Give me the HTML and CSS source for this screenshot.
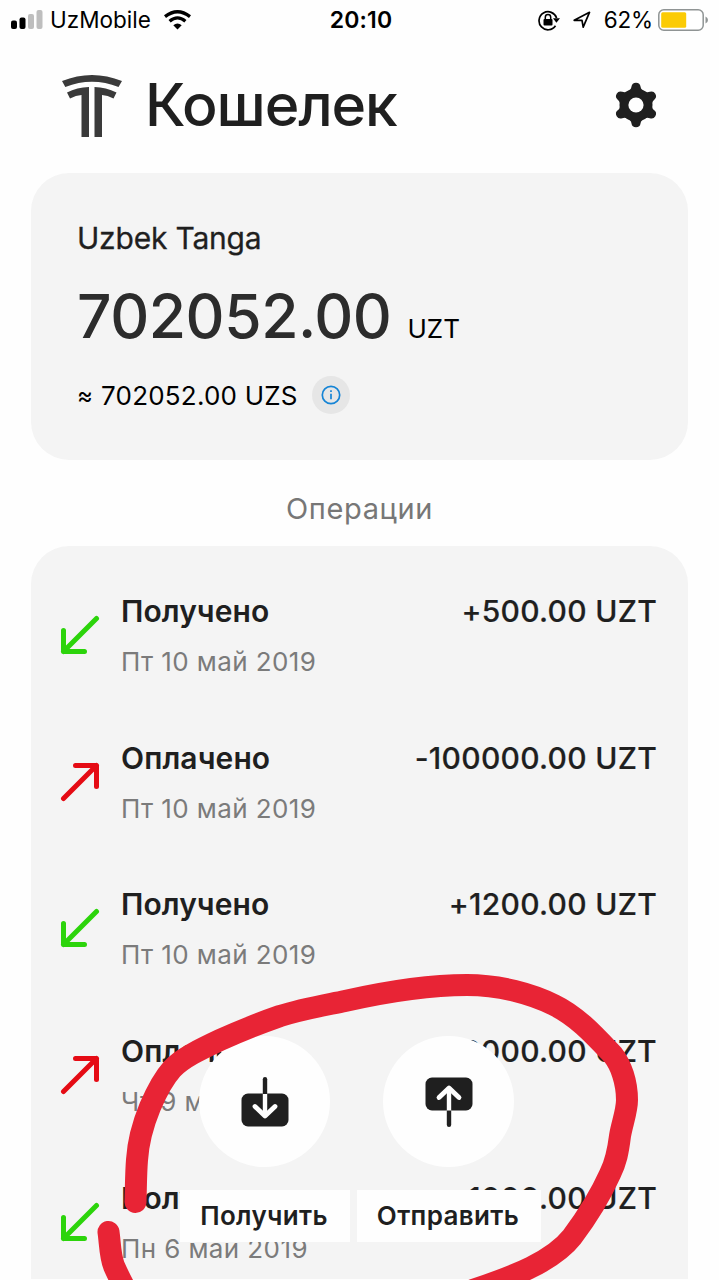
FILE: index.html
```html
<!DOCTYPE html>
<html lang="ru">
<head>
<meta charset="utf-8">
<title>Кошелек</title>
<link rel="stylesheet" href="styles.css">
</head>
<body>
<div class="screen">
  <div class="status">
    <div class="status-left">
      <svg class="signal" width="32" height="20" viewBox="0 0 32 20"><rect x="0" y="10.5" width="6" height="8.5" rx="2"/><rect x="8.5" y="7.5" width="6" height="11.5" rx="2"/><rect class="dim" x="17" y="4" width="6" height="15" rx="2"/><rect class="dim" x="25.5" y="0" width="6" height="19" rx="2"/></svg>
      <span class="carrier">UzMobile</span>
      <svg class="wifi" width="27" height="20" viewBox="0 0 27 20" fill="none" stroke="#000" stroke-width="3.3"><path d="M1 6.6Q13.500-3.200 26 6.600M5.600 11.200Q13.500 4.600 21.400 11.200"/><path d="M13.500 19.500L9.300 15.200Q13.500 11.600 17.700 15.200Z" fill="#000" stroke="none"/></svg>
    </div>
    <span class="clock">20:10</span>
    <div class="status-right">
      <svg width="23" height="21" viewBox="0 0 23 21"><path d="M17.500 15.800A9 9 0 1 1 18.600 8" fill="none" stroke="#000" stroke-width="1.700"/><path d="M15 8.200h7l-3.600 4.500z"/><rect x="5.500" y="9" width="9" height="6.500" rx="1"/><path d="M7.300 9.500V7.300a2.700 2.700 0 0 1 5.400 0v2.200" fill="none" stroke="#000" stroke-width="1.500"/></svg>
      <svg class="locate" width="18" height="18" viewBox="0 0 18 18"><path d="M1.200 9.300L16.500 1.300L10.200 16.200L9 9.300Z" fill="none" stroke="#000" stroke-width="1.700" stroke-linejoin="round"/></svg>
      <span class="percent">62%</span>
      <svg class="battery" width="51" height="23" viewBox="0 0 51 23"><rect x=".8" y=".8" width="44.400" height="20.400" rx="5" fill="#fff" stroke="#8f9494" stroke-width="1.500"/><rect x="3.200" y="3.200" width="25" height="15.600" rx="1.500" fill="#fbcb05"/><path d="M47.500 7.500Q50 8.500 50 11T47.500 14.500Z" fill="#8f9494"/></svg>
    </div>
  </div>

  <header class="header">
    <svg class="logo" width="60" height="63" viewBox="0 0 60 63" fill="#3a3a3a"><path d="M0 6Q30-6 60 6L56.500 12Q30 1.500 3.300 12Z"/><path d="M5 17.500Q15 12.300 27 12V62H19.500V20Q14 20.300 8 23.500Z"/><path d="M54.500 17.500Q44 12.300 32.500 12V62H40V20Q45.500 20.300 51.500 23.500Z"/></svg>
    <h1 class="title">Кошелек</h1>
    <svg class="gear" width="44" height="46" viewBox="-22 -23 44 46"><g fill="#1f1f1f"><circle r="16.500"/><path id="tooth" d="M-9-13Q-5-15-4.500-18.500Q-4-22.300 0-22.300T4.500-18.500Q5-15 9-13Z"/><use href="#tooth" transform="rotate(60)"/><use href="#tooth" transform="rotate(120)"/><use href="#tooth" transform="rotate(180)"/><use href="#tooth" transform="rotate(240)"/><use href="#tooth" transform="rotate(300)"/></g><circle r="7.600" fill="#fefefe"/></svg>
  </header>

  <section class="balance">
    <div class="currency">Uzbek Tanga</div>
    <div class="total"><span class="amount">702052.00</span><span class="unit">UZT</span></div>
    <div class="approx"><span class="tilde">≈</span><span class="approx-value">702052.00 UZS</span>
      <span class="info"><svg width="20" height="20" viewBox="0 0 20 20"><circle cx="10" cy="10" r="8.700" fill="none" stroke="#1584d5" stroke-width="1.700"/><path d="M10 8.800v5.500M10 5.300v1.700" stroke="#1584d5" stroke-width="1.700"/></svg></span>
    </div>
  </section>

  <h2 class="caption">Операции</h2>

  <section class="list">
    <div class="row"><svg class="arrow in" viewBox="0 0 40 40"><path d="M36.500 3.500L3.500 36.500M3.500 15.500V36.500H24.500"/></svg><div class="info-col"><div class="kind">Получено</div><div class="date">Пт 10 май 2019</div></div><div class="sum">+500.00 UZT</div></div>
    <div class="row"><svg class="arrow out" viewBox="0 0 40 40"><path d="M3.500 36.500L36.500 3.500M15.500 3.500H36.500V24.500"/></svg><div class="info-col"><div class="kind">Оплачено</div><div class="date">Пт 10 май 2019</div></div><div class="sum">-100000.00 UZT</div></div>
    <div class="row"><svg class="arrow in" viewBox="0 0 40 40"><path d="M36.500 3.500L3.500 36.500M3.500 15.500V36.500H24.500"/></svg><div class="info-col"><div class="kind">Получено</div><div class="date">Пт 10 май 2019</div></div><div class="sum">+1200.00 UZT</div></div>
    <div class="row"><svg class="arrow out" viewBox="0 0 40 40"><path d="M3.500 36.500L36.500 3.500M15.500 3.500H36.500V24.500"/></svg><div class="info-col"><div class="kind">Оплачено</div><div class="date">Чт 9 май 2019</div></div><div class="sum">-2000.00 UZT</div></div>
    <div class="row"><svg class="arrow in" viewBox="0 0 40 40"><path d="M36.500 3.500L3.500 36.500M3.500 15.500V36.500H24.500"/></svg><div class="info-col"><div class="kind">Получено</div><div class="date">Пн 6 май 2019</div></div><div class="sum">+1000.00 UZT</div></div>
  </section>

  <nav class="actions">
    <div class="action">
      <span class="round"><svg width="48" height="50" viewBox="0 0 48 50" fill="none" stroke-linecap="round" stroke-linejoin="round"><rect x=".5" y="16.500" width="47" height="33" rx="6.500" fill="#1f1f1f"/><path d="M24 2.200V16" stroke="#1f1f1f" stroke-width="4.400"/><path d="M24 17V39" stroke="#fefefe" stroke-width="4.400" stroke-linecap="butt"/><path d="M14 29.500L24 39L34 29.500" stroke="#fefefe" stroke-width="4.800"/></svg></span>
      <span class="label">Получить</span>
    </div>
    <div class="action send">
      <span class="round"><svg width="48" height="50" viewBox="0 0 48 50" fill="none" stroke-linecap="round" stroke-linejoin="round"><rect x=".5" y=".5" width="47" height="33" rx="6.500" fill="#1f1f1f"/><path d="M24 34V47.800" stroke="#1f1f1f" stroke-width="4.400"/><path d="M24 33.500V11" stroke="#fefefe" stroke-width="4.400" stroke-linecap="butt"/><path d="M14 20.500L24 11L34 20.500" stroke="#fefefe" stroke-width="4.800"/></svg></span>
      <span class="label">Отправить</span>
    </div>
  </nav>

  <svg class="marker" width="719" height="1280" viewBox="0 0 719 1280"><path d="M135.500 1202C136 1185 136 1172 137 1160C138 1144 143 1124 150 1107C156 1093 163 1079 172 1069C182 1058 201 1049 220 1040C240 1031 260 1023 280 1016C302 1009 326 1005 345 1001C385 992 425 985 467 985C500 985 532 994 554 1005C577 1016 595 1036 613 1055C621 1065 627 1082 627 1100C627 1111 622 1124 620 1136C618 1152 616 1162 610 1174C601 1194 587 1217 572 1237C553 1261 515 1276 473 1290"/><path d="M108.500 1232C110 1242 110 1256 114 1266C118 1275 122 1283 127 1292"/></svg>
</div>
</body>
</html>
```
FILE: styles.css
```css
* { box-sizing: border-box; }
body { margin: 0; background: #fefefe; color: #1f1f1f; font-family: Inter, "Liberation Sans", sans-serif; }
.screen { position: relative; width: 719px; height: 1280px; overflow: hidden; display: flex; flex-direction: column; }

.status { height: 40px; padding: 0 10px 0 11px; display: grid; grid-template-columns: 1fr auto 1fr; align-items: center; color: #000; font-size: 22.500px; line-height: 40px; flex: none; }
.status-left, .status-right { display: flex; align-items: center; }
.status-right { justify-content: flex-end; }
.dim { fill: #bebebe; }
.carrier { margin-left: 7px; }
.wifi { margin-left: 13px; }
.clock { padding-left: 2px; font-size: 23px; font-weight: 600; letter-spacing: .2px; }
.locate { margin-left: 12px; }
.percent { margin: 0 5px 0 13px; letter-spacing: -.2px; }

.header { height: 133px; padding: 0 61px 4px 62px; display: flex; align-items: center; flex: none; }
.logo { margin-top: 3px; }
.gear { margin-top: 1px; }
.title { margin: 0 auto 0 23px; font-size: 59px; font-weight: 500; line-height: 72px; letter-spacing: -1.150px; }

.balance { height: 287px; margin: 0 31px; padding: 46px 47px 0 46px; border-radius: 38px; background: #f4f4f4; flex: none; }
.currency { font-size: 30px; line-height: 38px; letter-spacing: -.200px; -webkit-text-stroke: .3px; }
.total { display: flex; align-items: baseline; line-height: 76px; margin-top: 21px; color: #000; }
.amount { font-size: 60.500px; font-weight: 500; color: #2c2c2c; letter-spacing: -.450px; }
.unit { margin-left: 16px; font-size: 26px; }
.approx { display: flex; align-items: center; height: 38px; margin-top: 9px; font-size: 26px; letter-spacing: .200px; color: #000; }
.tilde { font-size: 24px; }
.approx-value { margin-left: 8px; }
.info { margin-left: 14px; width: 38px; height: 38px; border-radius: 50%; background: #e6e6e6; display: flex; align-items: center; justify-content: center; }

.caption { margin: 0; height: 86px; padding-top: 30px; text-align: center; font-size: 29px; line-height: 38px; letter-spacing: .600px; font-weight: 400; color: #777; flex: none; }

.list { margin: 0 31px; border-radius: 38px 38px 0 0; background: #f4f4f4; flex: none; }
.row { display: flex; height: 146.700px; padding: 47px 31px 0 30px; }
.arrow { width: 40px; height: 40px; margin: 22px 21px 0 -1px; fill: none; stroke-width: 5; stroke-linecap: round; stroke-linejoin: round; }
.in { stroke: #2cd40b; }
.out { stroke: #e50b14; }
.kind { font-size: 30px; line-height: 36px; font-weight: 600; letter-spacing: .1px; }
.date { margin-top: 17px; font-size: 26px; line-height: 32px; letter-spacing: .400px; color: #7b7b7b; }
.sum { margin-left: auto; font-size: 30px; line-height: 36px; font-weight: 500; letter-spacing: .280px; -webkit-text-stroke: .2px; }

.actions { position: absolute; left: 180px; top: 1036px; display: flex; gap: 7px; }
.action { display: flex; flex-direction: column; align-items: center; width: 170px; }
.send { width: 184px; }
.round { width: 131px; height: 131px; margin-right: 1px; border-radius: 50%; background: #fefefe; display: flex; align-items: center; justify-content: center; }
.label { margin-top: 23px; width: 100%; height: 52px; padding-right: 2px; background: #fefefe; text-align: center; font-size: 26px; line-height: 52px; font-weight: 600; letter-spacing: .350px; }
.marker { position: absolute; left: 0; top: 0; fill: none; stroke: #e82435; stroke-width: 22; stroke-linecap: round; stroke-linejoin: round; }
```
